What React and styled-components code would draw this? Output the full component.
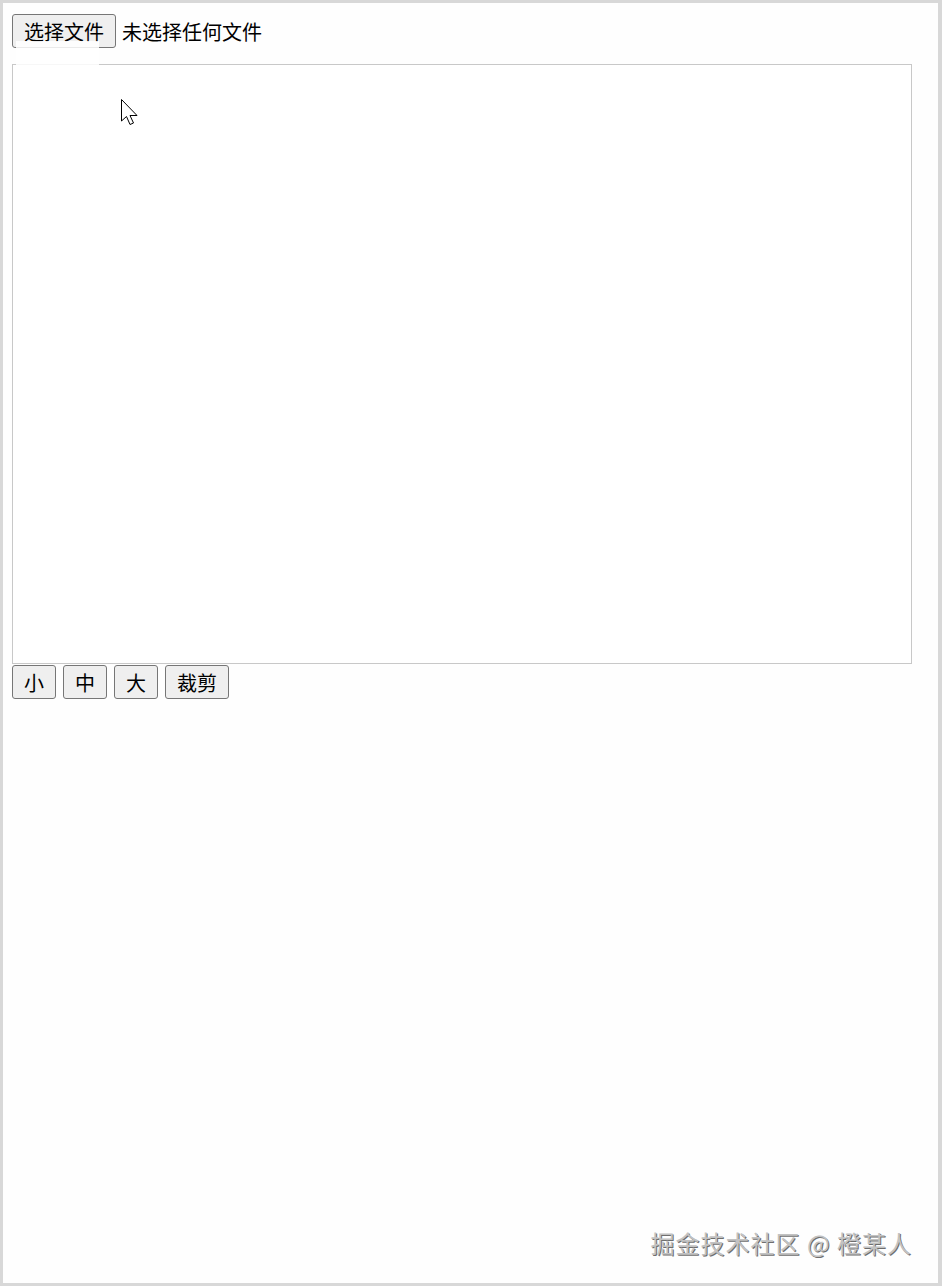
import * as React from "react";
import styled, { createGlobalStyle } from "styled-components";

const GlobalStyle = createGlobalStyle`
  html, body {
    margin: 0;
    padding: 0;
    background: #ffffff;
  }
  body {
    font-family: "Noto Sans CJK SC", "Noto Sans", sans-serif;
    color: #000;
  }
`;

const Frame = styled.div`
  position: relative;
  box-sizing: border-box;
  width: 942px;
  height: 1286px;
  border: 3px solid #d8d8d8;
  border-right-width: 4px;
  background: #fefefe;
  padding: 11px 9px 28px;
  display: flex;
  flex-direction: column;
`;

const FileRow = styled.div`
  display: flex;
  align-items: center;
  gap: 6px;
  height: 34px;
`;

const Button = styled.button`
  box-sizing: border-box;
  height: 34px;
  padding: 2px 11px 0;
  margin: 0;
  font-family: "Noto Sans CJK SC", sans-serif;
  font-size: 20px;
  line-height: 1;
  color: #000;
  background: #efefef;
  border: 1px solid #767676;
  border-radius: 3px;
`;

const FileLabel = styled.span`
  padding-top: 2px;
  font-size: 20px;
  line-height: 1;
  color: #000;
`;

const Canvas = styled.div`
  box-sizing: border-box;
  width: 900px;
  height: 600px;
  margin-top: 16px;
  border: 1px solid #c8c8c8;
  background: #fff;
`;

const Toolbar = styled.div`
  display: flex;
  gap: 7px;
  margin-top: 1px;
`;

const Watermark = styled.div`
  margin-top: auto;
  align-self: flex-end;
  margin-right: 17px;
  font-size: 24px;
  line-height: 1;
  color: #c2c2c2;
  text-shadow: 1px 1px 0 #6e6e6e;
  letter-spacing: 1px;
`;

const Smudge = styled.div`
  position: absolute;
  left: 13px;
  top: 38px;
  width: 83px;
  height: 28px;
  background: rgba(255, 255, 255, 0.85);
`;

const Cursor = styled.svg`
  position: absolute;
  left: 117px;
  top: 95px;
`;

const sizes = ["小", "中", "大", "裁剪"];

const App = () => {
  return (
    <>
      <GlobalStyle />
      <Frame>
        <FileRow>
          <Button>选择文件</Button>
          <FileLabel>未选择任何文件</FileLabel>
        </FileRow>
        <Canvas />
        <Toolbar>
          {sizes.map((s) => (
            <Button key={s}>{s}</Button>
          ))}
        </Toolbar>
        <Watermark>掘金技术社区 @ 橙某人</Watermark>
        <Smudge />
        <Cursor width="22" height="30" viewBox="0 0 22 30">
          <path
            d="M1.5 1.5 L1.5 23 L6.5 18.5 L10 26.5 L13.5 25 L10 17.5 L17 17.5 Z"
            fill="#fff"
            stroke="#000"
            strokeWidth="1"
            strokeLinejoin="miter"
          />
        </Cursor>
      </Frame>
    </>
  );
};

export default App;
